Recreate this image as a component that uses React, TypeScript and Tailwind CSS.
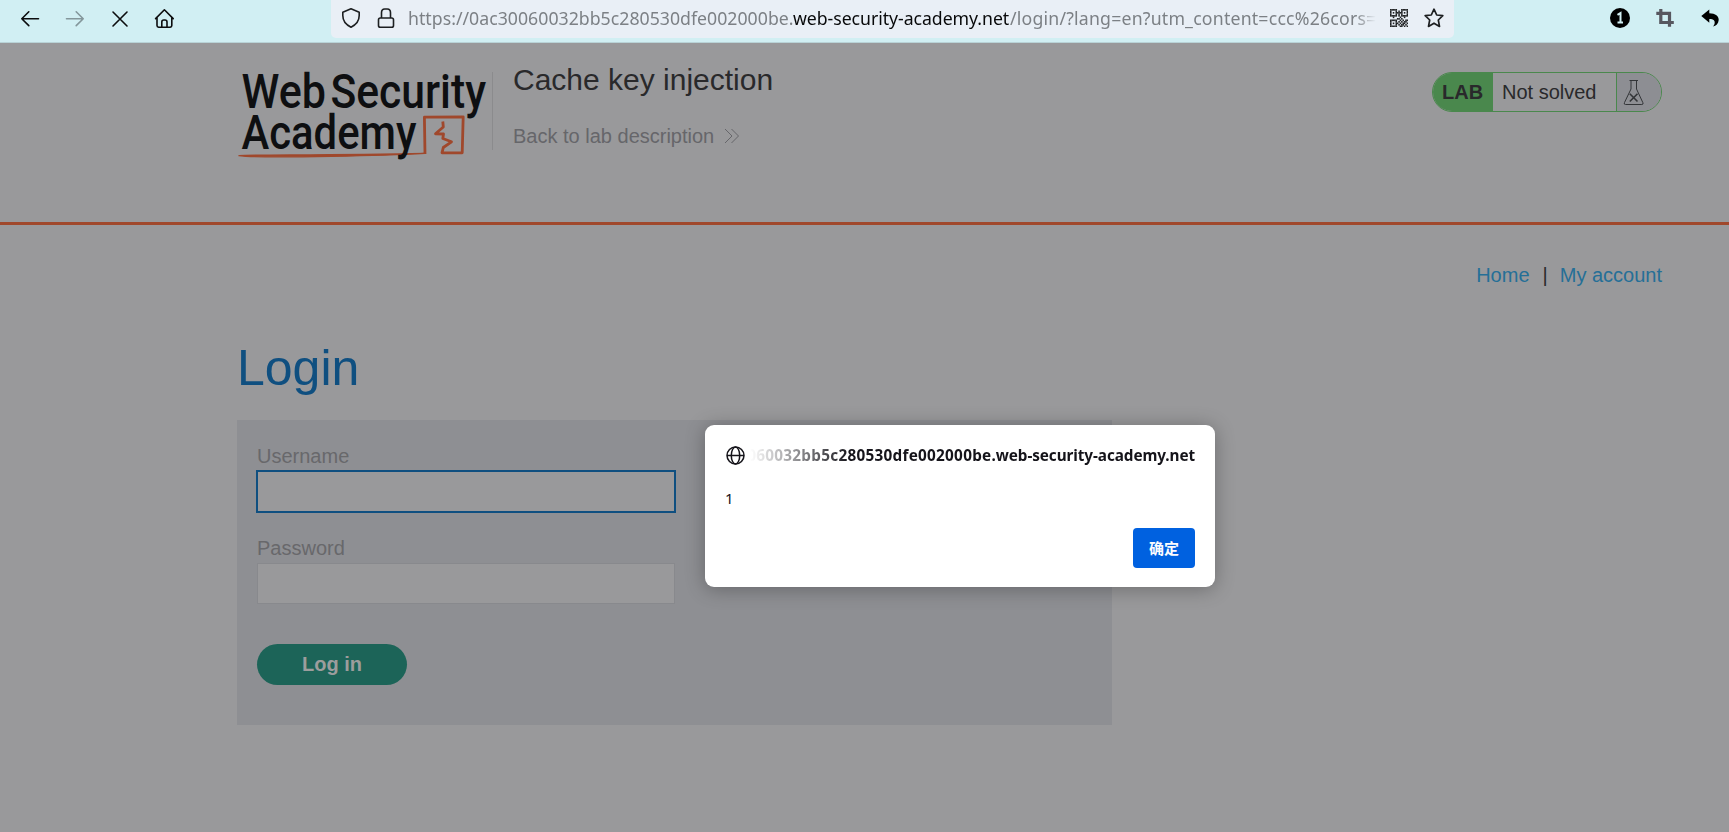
import React from "react";

const qrRows = [
  "1111100011111",
  "1000101010001",
  "1010111110101",
  "1000101010001",
  "1111101011111",
  "0010000100100",
  "0000011010000",
  "1111100101011",
  "1000101010110",
  "1010110101101",
  "1000101011010",
  "1111100110101",
];

function QrIcon() {
  return (
    <svg width="18" height="18" viewBox="0 0 13 12" preserveAspectRatio="none" className="fill-[#222426]">
      {qrRows.flatMap((row, y) =>
        row.split("").map((c, x) => (c === "1" ? <rect key={x + "-" + y} x={x} y={y} width="1.1" height="1.1" /> : null))
      )}
    </svg>
  );
}

function Toolbar() {
  return (
    <div className="flex h-[43px] shrink-0 items-start border-b border-[#b9d3d7] bg-[#d1eff3]">
      <svg width="331" height="38" viewBox="0 0 331 38" fill="none" stroke="#0c0d0e" strokeWidth="1.6" strokeLinecap="round" strokeLinejoin="round">
        <path d="M38.5 18.7H22M28.8 11.8L21.8 18.7L28.8 25.6" />
        <path d="M66.5 18.7H83M76.2 11.8L83.2 18.7L76.2 25.6" stroke="#84979b" />
        <path d="M113 12L127 26M127 12L113 26" />
        <path d="M155.6 18.6L164.4 9.8L173.2 18.6M157 17.5V25.6Q157 27.2 158.6 27.2H170.2Q171.8 27.2 171.8 25.6V17.5M161.8 27V22Q161.8 20 163.8 20H165Q167 20 167 22V27" />
      </svg>
      <div className="flex h-[38px] w-[1123px] items-start rounded-b-[5px] bg-[#e9eff6]">
        <svg width="77" height="38" viewBox="0 0 77 38" fill="none" stroke="#1d1f21" strokeWidth="1.6" strokeLinejoin="round" className="shrink-0">
          <path d="M20 8.8L28.2 12.2V15.6C28.2 20.3 26 24.4 20 27.2C14 24.4 11.8 20.3 11.8 15.6V12.2Z" />
          <rect x="47.5" y="18" width="15" height="9.2" rx="1.8" />
          <path d="M50.5 18V12.8Q50.5 9 53.7 9H56.3Q59.5 9 59.5 12.8V18" />
        </svg>
        <div className="flex h-[38px] w-[970px] shrink-0 overflow-hidden whitespace-nowrap font-['Noto_Sans','Open_Sans',sans-serif] text-[17.7px] leading-[37px] text-[#7c8085] [mask-image:linear-gradient(to_right,#000_97.6%,transparent_99.8%)]">
          <span className="w-[385px] shrink-0 tracking-[0.02px]">https://0ac30060032bb5c280530dfe002000be.</span>
          <span className="w-[217px] shrink-0 tracking-[-0.05px] text-[#08090a]">web-security-academy.net</span>
          <span className="shrink-0 tracking-[0.2px]">/login/?lang=en?utm_content=ccc%26cors=1</span>
        </div>
        <div className="flex pl-[12px] pt-[9px]">
          <QrIcon />
          <svg width="20" height="20" viewBox="0 0 20 20" fill="none" stroke="#1d1f21" strokeWidth="1.7" strokeLinejoin="round" className="ml-4 -mt-px">
            <path d="M10 1.2L12.7 7L18.8 7.7L14.3 12L15.5 18.4L10 15.2L4.5 18.4L5.7 12L1.2 7.7L7.3 7Z" />
          </svg>
        </div>
      </div>
      <svg width="275" height="38" viewBox="1454 0 275 38">
        <circle cx="1620" cy="18" r="10" fill="#000" />
        <path d="M1617.5 14.8L1620.5 13V22.5M1617.5 22.5H1623" fill="none" stroke="#d1eff3" strokeWidth="2" />
        <path d="M1660.8 9V22.5H1673.8M1656.3 13.3H1669.5V26.8" fill="none" stroke="#57575f" strokeWidth="3.2" />
        <path d="M1701.3 16L1709.3 9.4V13.2C1715.5 13.2 1719 16.2 1718.7 20C1718.4 23.5 1716.1 26 1713 26.6C1714.9 24.4 1715.3 21.8 1713.9 20.2C1713 19.2 1711.4 18.9 1709.3 18.9V22.7Z" fill="#000" />
      </svg>
    </div>
  );
}

function Logo() {
  return (
    <svg width="256" height="110" viewBox="236 60 256 110" className="mt-[17px] shrink-0 font-[Roboto,sans-serif]">
      <g fill="#0e0f11" fontSize="48" fontWeight="500">
        <text x="241.5" y="108.2" textLength="84.5" lengthAdjust="spacingAndGlyphs">Web</text>
        <text x="330.5" y="108.2" textLength="155.5" lengthAdjust="spacingAndGlyphs">Security</text>
      </g>
      <g fill="none" stroke="#a0482c" strokeWidth="2.8" strokeLinejoin="round">
        <path d="M425 154L424.4 117.2L463.2 116.8L462.2 152.8L442 152.8L443.3 147.5L451.5 141.8L442.8 138.5L443.5 134L435.5 133.8L443.3 127L442.8 121.5" />
        <path d="M239 155.6C255 154.8 330 155.2 425 153.4C380 156 280 157.6 246 156.4Z" fill="#a0482c" strokeWidth="1.4" />
      </g>
      <text x="241.5" y="148.5" textLength="175" lengthAdjust="spacingAndGlyphs" fill="#0e0f11" fontSize="48" fontWeight="500">Academy</text>
    </svg>
  );
}

function LabStatus() {
  return (
    <div className="mt-[29px] flex h-10 w-[230px] overflow-hidden rounded-full border border-[#4a884d] text-[20px] leading-[38px] text-[#29292b]">
      <div className="w-[60px] bg-[#4a884d] pl-[9px] font-bold">LAB</div>
      <div className="w-[123px] pl-[9px]">Not solved</div>
      <div className="flex-1 border-l border-[#4a884d] bg-[#8d8e93] pl-[6px] pt-[6px]">
        <svg width="22" height="27" viewBox="0 0 22 27" fill="none" stroke="#333538">
          <path d="M6.5 1.5H15M8 1.5V10L1.5 23.5Q0.5 25.5 2.5 25.5H18.8Q20.8 25.5 19.8 23.5L13.5 10V1.5" strokeWidth="1" />
          <path d="M6.8 14.8L14.5 22.5M14.5 14.8L6.8 22.5" strokeWidth="1.6" />
        </svg>
      </div>
    </div>
  );
}

function AlertDialog() {
  return (
    <div className="absolute left-[705px] top-[425px] flex h-[162px] w-[510px] flex-col rounded-[9px] bg-white pl-[21px] pr-5 text-[#15141a] shadow-[0_2px_20px_rgba(0,0,0,0.3)] font-['Noto_Sans','Noto_Sans_CJK_SC',sans-serif]">
      <div className="mt-[17px] flex h-[26px] items-center">
        <svg width="19" height="19" viewBox="0 0 19 19" fill="none" stroke="#15141a" strokeWidth="1.5" className="mt-px shrink-0">
          <circle cx="9.5" cy="9.5" r="8.5" />
          <ellipse cx="9.5" cy="9.5" rx="4.2" ry="8.5" />
          <path d="M1 9.5H18" />
        </svg>
        <div className="ml-[5px] flex h-[26px] w-[445px] justify-end overflow-hidden whitespace-nowrap text-[15.3px] font-bold leading-[26px] [mask-image:linear-gradient(to_right,transparent,#000_100px)]">
          <span className="tracking-[0.27px]">0ac30060032bb5c280530dfe002000be</span>
          <span className="tracking-[-0.08px]">.web-security-academy.net</span>
        </div>
      </div>
      <div className="-ml-px mt-[18px] text-[15px] leading-6">1</div>
      <button className="mt-[18px] h-10 w-[62px] self-end rounded bg-[#0061e0] text-[15px] font-bold leading-[39px] text-[#fbfbfe]">确定</button>
    </div>
  );
}

export default function App() {
  return (
    <div className="relative flex h-[832px] w-[1729px] flex-col overflow-hidden bg-[#99999b] font-['Liberation_Sans',Arial,sans-serif] text-[20px]">
      <Toolbar />
      <header className="flex h-[182px] shrink-0 border-b-[3px] border-[#a0482c] pl-[236px] pr-[67px]">
        <Logo />
        <div className="mt-[29px] h-[78px] w-px bg-[#8b8b8d]" />
        <div className="ml-5 flex-1">
          <h1 className="mt-[19px] text-[30px] leading-[36px] text-[#29292b]">Cache key injection</h1>
          <a className="mt-[26px] flex items-center leading-6 text-[#66666a]">
            Back to lab description
            <svg width="16" height="16" viewBox="0 0 16 16" fill="none" stroke="#66666a" strokeWidth="1" className="ml-[10px]">
              <path d="M1 1L8 8L1 15M7.5 1L14.5 8L7.5 15" />
            </svg>
          </a>
        </div>
        <LabStatus />
      </header>
      <main className="flex flex-1 flex-col pl-[237px] pr-[67px]">
        <nav className="mt-[38px] flex justify-end leading-6 text-[#256f97]">
          <a>Home</a>
          <span className="ml-[13px] mr-[12px] text-[#29292b]">|</span>
          <a>My account</a>
        </nav>
        <h1 className="mt-[53px] text-[50px] leading-[56px] text-[#0f4f80]">Login</h1>
        <form className="mt-[24px] h-[305px] w-[875px] bg-[#8e8f93] px-5 pt-6 text-[#68686b]">
          <label className="block leading-6">Username</label>
          <div className="-ml-px mt-[2px] h-[43px] w-[420px] border-2 border-[#0f4f80] bg-[#99999b]" />
          <label className="mt-[23px] block leading-6">Password</label>
          <div className="mt-[3px] h-[41px] w-[418px] border border-[#88898d] bg-[#99999b]" />
          <div className="mt-10 h-[41px] w-[150px] rounded-full bg-[#1c6458] text-center font-bold leading-[40px] text-[#9c9d9d]">Log in</div>
        </form>
      </main>
      <AlertDialog />
    </div>
  );
}
